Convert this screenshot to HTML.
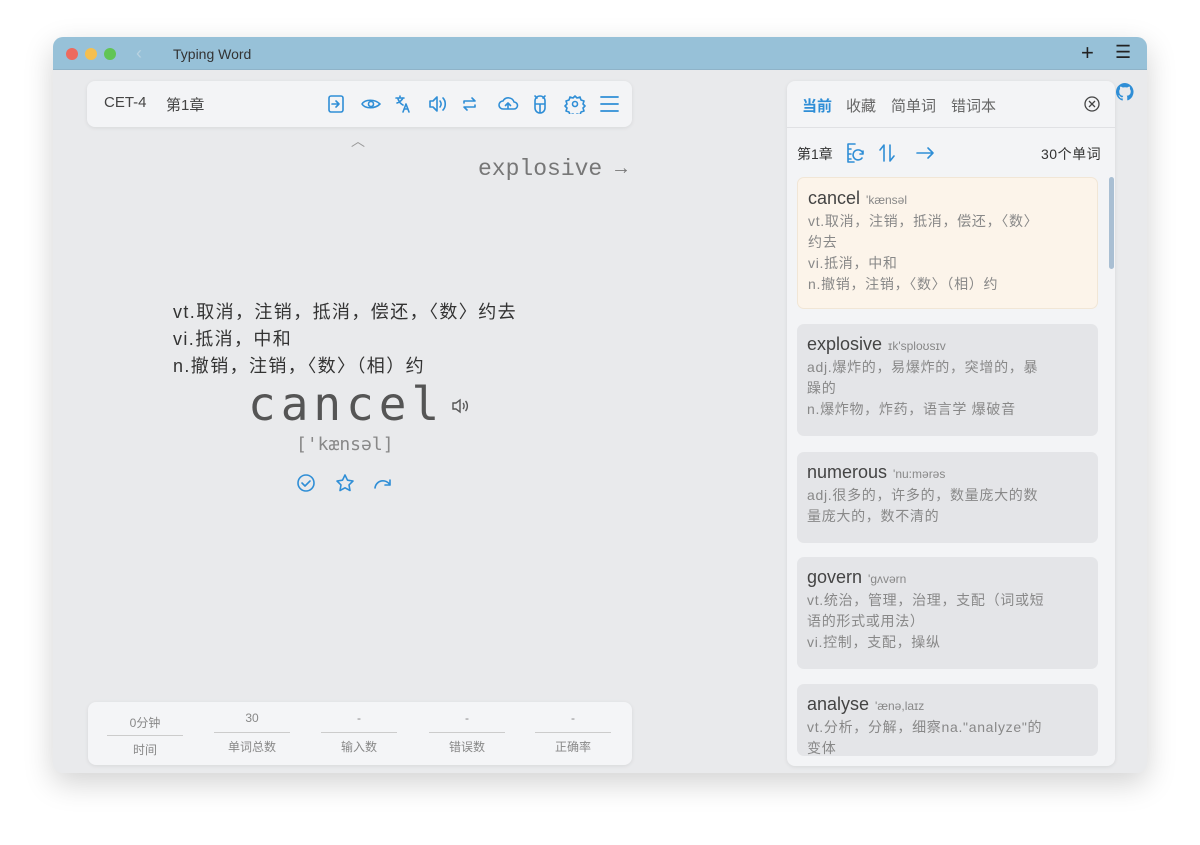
<!DOCTYPE html>
<html><head><meta charset="utf-8"><style>
*{margin:0;padding:0;box-sizing:border-box}
body{width:1200px;height:845px;background:#fff;font-family:"Liberation Sans","Noto Sans CJK SC",sans-serif;position:relative;overflow:hidden}
.win{position:absolute;left:53px;top:37px;width:1094px;height:736px;border-radius:10px;background:#e9eaec;box-shadow:0 10px 30px rgba(0,0,0,.18);overflow:hidden}
.tb{position:absolute;left:0;top:0;width:100%;height:33px;background:#97c1d8;border-bottom:1px solid #8fb3c8}
.dot{position:absolute;top:11px;width:12px;height:12px;border-radius:50%}
.a{position:absolute}
.card{position:absolute;background:#f3f4f6;border-radius:8px;box-shadow:0 1px 4px rgba(0,0,0,.08)}
svg{position:absolute}
.wc{position:absolute;left:10px;width:301px;border-radius:7px;background:#e4e5e8;padding:10px 10px;font-size:14px;color:#888;line-height:21px;letter-spacing:0.7px}
.wc .w{font-size:18px;color:#444;letter-spacing:0}
.wc .p{font-size:12px;color:#888;margin-left:6px;letter-spacing:0}
.st{position:absolute;top:12px;width:76px;text-align:center;font-size:12px;color:#888}
.st .v{border-bottom:1px solid #ccc;padding-bottom:6px;height:22px}
.st .l{padding-top:5px}
</style></head><body>
<div class="win">
 <div class="tb">
  <div class="dot" style="left:13px;background:#ed6a5e"></div>
  <div class="dot" style="left:32px;background:#f5bf4f"></div>
  <div class="dot" style="left:51px;background:#61c554"></div>
  <div class="a" style="left:83px;top:6px;color:#b8d2e0;font-size:18px">‹</div>
  <div class="a" style="left:120px;top:9px;font-size:14px;color:#333;font-weight:500">Typing Word</div>
  <div class="a" style="left:1028px;top:3px;font-size:22px;color:#222">+</div>
  <div class="a" style="left:1062px;top:5px;font-size:18px;color:#222">☰</div>
 </div>
 <div class="card" style="left:34px;top:44px;width:545px;height:46px;">
  <div class="a" style="left:17px;top:13px;font-size:15px;color:#444">CET-4</div>
  <div class="a" style="left:79px;top:13px;font-size:15px;color:#444">第1章</div>
  <svg style="left:240px;top:13px" width="270" height="20" fill="none" stroke="#2f8ed6" stroke-width="1.6" stroke-linecap="round" stroke-linejoin="round">
   <rect x="2" y="2" width="14" height="16" rx="2"/><path d="M5 10h7M9 7l3 3-3 3"/>
   <path d="M35 10c3-5 13-5 18 0c-5 5-15 5-18 0z"/><circle cx="44" cy="10" r="2.5"/>
   <path d="M69 4h8M73 2v2M70 9c3-1 5-3 6-5M71 5c1 3 3 5 5 6M76 18l3-8 3 8M77 15h4"/>
   <path d="M103 7h3l4-4v14l-4-4h-3zM113 7c1.5 2 1.5 4 0 6M116 4c3 3 3 9 0 12"/>
   <path d="M137 7h11l-3-3M148 13h-11l3 3M137 7v2M148 13v-2"/>
   <path d="M176 15a4 4 0 0 1 0-8a6 6 0 0 1 11 1a3.5 3.5 0 0 1 0 7zM181 15v-6M178.5 11.5l2.5-2.5 2.5 2.5"/>
   <path d="M208 7a5 5 0 0 1 10 0v7a5 5 0 0 1-10 0zM208 10h10M213 10v8M210 4l-2-2M216 4l2-2"/>
   <circle cx="248" cy="10" r="2.5"/><path d="M248 2l2 2 3-1 1 3 3 1-1 3 2 2-2 2 1 3-3 1-1 3-3-1-2 2-2-2-3 1-1-3-3-1 1-3-2-2 2-2-1-3 3-1 1-3 3 1z"/>
  </svg>
  <svg style="left:513px;top:14px" width="20" height="18" fill="none" stroke="#2f8ed6" stroke-width="1.8" stroke-linecap="round"><path d="M1 2h17M1 9h17M1 16h17"/></svg>
 </div>
 <div class="a" style="left:298px;top:94px;color:#999;font-size:14px">︿</div>
 <div class="a" style="left:425px;top:119px;font-family:'Liberation Mono',monospace;font-size:23px;color:#777">explosive</div>
 <div class="a" style="left:558px;top:120px;font-size:20px;color:#777">→</div>
 <div class="a" style="left:120px;top:262px;font-size:18px;color:#333;line-height:27px;letter-spacing:1.4px">vt.取消，注销，抵消，偿还，〈数〉约去<br>vi.抵消，中和<br>n.撤销，注销，〈数〉（相）约</div>
 <div class="a" style="left:195px;top:340px;font-family:'DejaVu Sans Mono','Liberation Mono',monospace;font-size:46px;letter-spacing:5px;color:#555">cancel</div>
 <svg style="left:398px;top:361px" width="20" height="16" fill="none" stroke="#555" stroke-width="1.4"><path d="M2 5h3l4-3v12l-4-3H2zM12 5c1.5 1.5 1.5 4.5 0 6M14.5 3c2.5 3 2.5 7 0 10"/></svg>
 <div class="a" style="left:243px;top:397px;font-family:'DejaVu Sans Mono',monospace;font-size:18px;color:#888">['kænsəl]</div>
 <svg style="left:243px;top:436px" width="100" height="22" fill="none" stroke="#2f8ed6" stroke-width="1.6" stroke-linecap="round" stroke-linejoin="round">
  <circle cx="10" cy="10" r="8"/><path d="M6 10l3 3 5-5"/>
  <path d="M49 2l2.5 5.2 5.5.8-4 3.9 1 5.6-5-2.7-5 2.7 1-5.6-4-3.9 5.5-.8z"/>
  <path d="M79 15a8 8 0 0 1 15-3M94 7v5h-5"/>
 </svg>
 <div class="card" style="left:35px;top:665px;width:544px;height:63px;background:#f4f5f7">
  <div class="st" style="left:19px"><div class="v">0分钟</div><div class="l">时间</div></div>
  <div class="st" style="left:126px;top:9px"><div class="v">30</div><div class="l">单词总数</div></div>
  <div class="st" style="left:233px;top:9px"><div class="v">-</div><div class="l">输入数</div></div>
  <div class="st" style="left:341px;top:9px"><div class="v">-</div><div class="l">错误数</div></div>
  <div class="st" style="left:447px;top:9px"><div class="v">-</div><div class="l">正确率</div></div>
 </div>
 <div class="card" style="left:734px;top:44px;width:328px;height:685px;background:#f3f4f6;overflow:hidden">
  <div class="a" style="left:15px;top:14px;font-size:15px;color:#2f8ed6;font-weight:bold">当前</div>
  <div class="a" style="left:59px;top:14px;font-size:15px;color:#666">收藏</div>
  <div class="a" style="left:104px;top:14px;font-size:15px;color:#666">简单词</div>
  <div class="a" style="left:164px;top:14px;font-size:15px;color:#666">错词本</div>
  <svg style="left:297px;top:15px" width="16" height="16" fill="none" stroke="#444" stroke-width="1.3"><circle cx="8" cy="8" r="7"/><path d="M5 5l6 6M11 5l-6 6"/></svg>
  <div class="a" style="left:0;top:46px;width:100%;border-top:1px solid #e0e1e4"></div>
  <div class="a" style="left:10px;top:63px;font-size:14px;color:#333">第1章</div>
  <svg style="left:58px;top:61px" width="100" height="22" fill="none" stroke="#2f8ed6" stroke-width="1.6" stroke-linecap="round" stroke-linejoin="round">
   <path d="M10 2H3v18h6M3 7h3M3 12h3M3 17h3"/><path d="M18 12a5 5 0 1 0-1 4M18 9v3h-3"/>
   <path d="M39 19V3l-4 5M45 3v16l4-5"/>
   <path d="M72 11h16M83 6l5 5-5 5"/>
  </svg>
  <div class="a" style="left:254px;top:63px;font-size:14px;color:#333;letter-spacing:0.5px">30个单词</div>
  <div class="a" style="left:322px;top:96px;width:5px;height:92px;border-radius:3px;background:#a9bfd3"></div>
  <div class="wc" style="top:96px;height:132px;background:#fcf4ea;border:1px solid #f1e6d6"><span class="w">cancel</span><span class="p">'kænsəl</span><br>vt.取消，注销，抵消，偿还，〈数〉<br>约去<br>vi.抵消，中和<br>n.撤销，注销，〈数〉（相）约</div>
  <div class="wc" style="top:243px;height:112px"><span class="w">explosive</span><span class="p">ɪk'sploʊsɪv</span><br>adj.爆炸的，易爆炸的，突增的，暴<br>躁的<br>n.爆炸物，炸药，语言学 爆破音</div>
  <div class="wc" style="top:371px;height:91px"><span class="w">numerous</span><span class="p">'nu:mərəs</span><br>adj.很多的，许多的，数量庞大的数<br>量庞大的，数不清的</div>
  <div class="wc" style="top:476px;height:112px"><span class="w">govern</span><span class="p">'gʌvərn</span><br>vt.统治，管理，治理，支配（词或短<br>语的形式或用法）<br>vi.控制，支配，操纵</div>
  <div class="wc" style="top:603px;height:72px;overflow:hidden"><span class="w">analyse</span><span class="p">'ænə,laɪz</span><br>vt.分析，分解，细察na."analyze"的<br>变体</div>
 </div>
 <svg style="left:1063px;top:46px" width="18" height="18" viewBox="0 0 16 16"><path fill="#2f8ed6" d="M8 0a8 8 0 0 0-2.5 15.6c.4 0 .5-.2.5-.4v-1.5c-2.2.5-2.7-1-2.7-1-.4-.9-.9-1.2-.9-1.2-.7-.5.1-.5.1-.5.8.1 1.2.8 1.2.8.7 1.3 1.9.9 2.3.7.1-.5.3-.9.5-1.1-1.8-.2-3.600-.9-3.6-4 0-.9.3-1.6.8-2.1-.1-.2-.4-1 .1-2.1 0 0 .7-.2 2.2.8a7.5 7.5 0 0 1 4 0c1.5-1 2.2-.8 2.2-.8.4 1.1.2 1.9.1 2.1.5.6.8 1.3.8 2.1 0 3.1-1.9 3.7-3.6 3.9.3.3.5.8.5 1.5v2.2c0 .2.1.5.6.4A8 8 0 0 0 8 0z"/></svg>
</div>
</body></html>
